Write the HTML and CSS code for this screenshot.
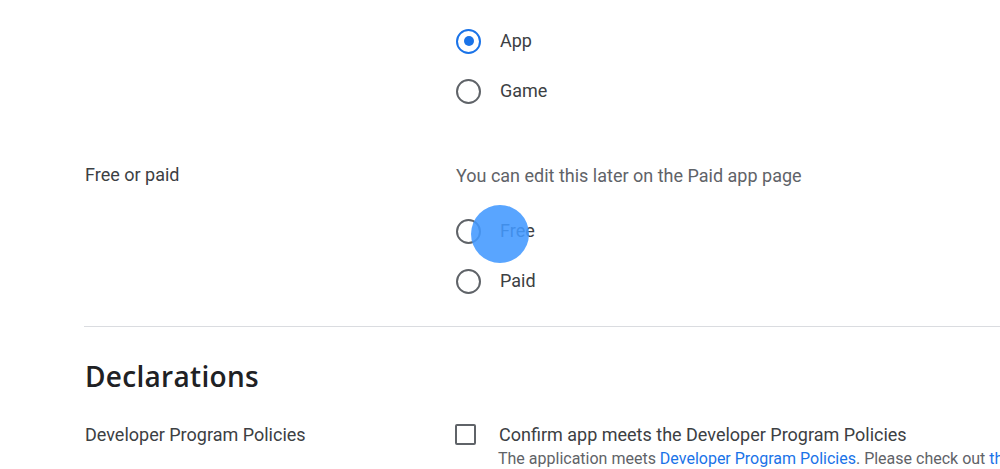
FILE: index.html
```html
<!DOCTYPE html>
<html>
<head>
<meta charset="utf-8">
<link rel="stylesheet" href="styles.css">
</head>
<body>
<div class="page">
  <div class="row row-type">
    <div class="label"></div>
    <div class="field">
      <div class="option"><span class="radio checked"></span><span class="opt-text">App</span></div>
      <div class="option"><span class="radio"></span><span class="opt-text">Game</span></div>
    </div>
  </div>

  <div class="row row-price">
    <div class="label">Free or paid</div>
    <div class="field">
      <div class="helper">You can edit this later on the Paid app page</div>
      <div class="options">
        <div class="option"><span class="radio"></span><span class="opt-text">Free</span><span class="touch"></span></div>
        <div class="option"><span class="radio"></span><span class="opt-text">Paid</span></div>
      </div>
    </div>
  </div>

  <hr class="divider">

  <h2 class="section-title">Declarations</h2>

  <div class="row row-policy">
    <div class="label">Developer Program Policies</div>
    <div class="field">
      <div class="check-line"><span class="checkbox"></span><span class="check-text">Confirm app meets the Developer Program Policies</span></div>
      <div class="sub">The application meets <a href="#">Developer Program Policies</a>. Please check out <a href="#">the</a></div>
    </div>
  </div>
</div>
</body>
</html>
```
FILE: styles.css
```css
html, body {
  margin: 0;
  padding: 0;
  background: #fff;
  overflow: hidden;
}
body {
  width: 1000px;
  height: 469px;
  font-family: Roboto, "Liberation Sans", sans-serif;
  color: #3c4043;
}
.page {
  padding: 16px 0 0 85px;
}
.row {
  display: grid;
  grid-template-columns: 371px 1fr;
}
.label {
  font-size: 18px;
  line-height: 24px;
  color: #3c4043;
}
.option {
  position: relative;
  display: flex;
  align-items: center;
  height: 50px;
}
.radio {
  box-sizing: border-box;
  width: 25px;
  height: 25px;
  border: 2.2px solid #5f6368;
  border-radius: 50%;
  display: flex;
  align-items: center;
  justify-content: center;
  flex: none;
}
.radio.checked {
  border-color: #1a73e8;
}
.radio.checked::after {
  content: "";
  width: 10px;
  height: 10px;
  border-radius: 50%;
  background: #1a73e8;
}
.opt-text {
  margin: 0 0 1px 19px;
  font-size: 18px;
  line-height: 24px;
  color: #3c4043;
}
.touch {
  position: absolute;
  left: 15px;
  top: -1px;
  width: 58px;
  height: 58px;
  border-radius: 50%;
  background: rgba(66, 153, 255, 0.88);
}
.row-price {
  margin-top: 48px;
}
.row-price .label {
  margin-top: -1px;
}
.helper {
  font-size: 18px;
  line-height: 24px;
  color: #5f6368;
}
.options {
  margin-top: 18px;
}
.divider {
  margin: 20px 0 0 -1px;
  border: 0;
  border-top: 1px solid #dadce0;
  height: 0;
}
.section-title {
  margin: 31px 0 0 0;
  font-family: "Open Sans", Roboto, sans-serif;
  font-weight: 600;
  font-size: 28px;
  letter-spacing: 0.3px;
  line-height: 36px;
  color: #202124;
}
.row-policy {
  margin-top: 28px;
}
.row-policy .label {
  margin-top: 1px;
}
.check-line {
  display: flex;
  align-items: center;
  height: 24px;
}
.checkbox {
  box-sizing: border-box;
  width: 21px;
  height: 21px;
  border: 2.2px solid #5f6368;
  border-radius: 2px;
  flex: none;
  margin-left: -1px;
}
.check-text {
  margin-left: 23px;
  font-size: 18px;
  color: #3c4043;
}
.sub {
  margin: 3px 0 0 42px;
  font-size: 16px;
  line-height: 20px;
  color: #5f6368;
  white-space: nowrap;
}
.sub a {
  color: #1a73e8;
  text-decoration: none;
}
```
